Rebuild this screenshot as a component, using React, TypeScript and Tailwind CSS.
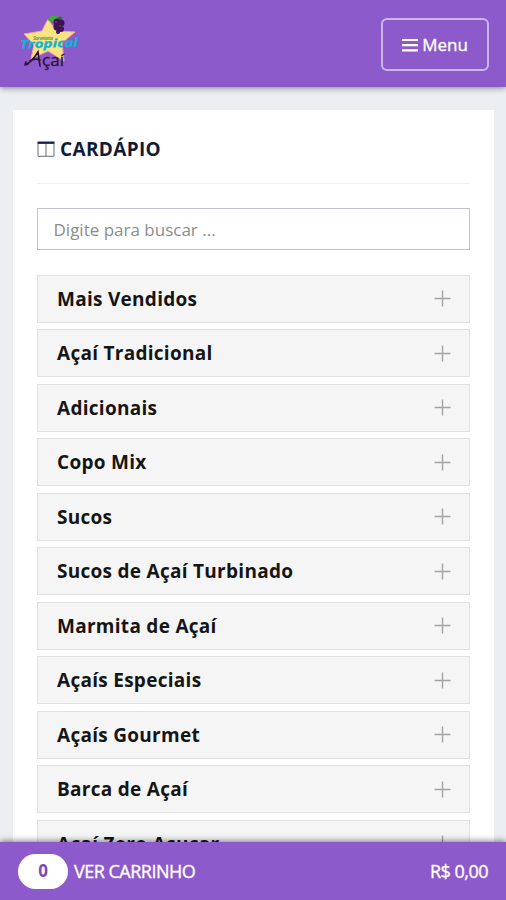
import { useState } from 'react'

const categories = [
  'Mais Vendidos',
  'Açaí Tradicional',
  'Adicionais',
  'Copo Mix',
  'Sucos',
  'Sucos de Açaí Turbinado',
  'Marmita de Açaí',
  'Açaís Especiais',
  'Açaís Gourmet',
  'Barca de Açaí',
  'Açaí Zero Açucar',
]

function Logo() {
  return (
    <svg width="64" height="60" viewBox="18 12 64 60" className="overflow-visible">
      <path
        d="M48 19 L56 31 L75 32 L62 43 L64 61 L48 51 L31 59 L34 45 L24 34 L42 31 Z"
        fill="#fde383"
        stroke="#f3ab91"
        strokeWidth="1"
      />
      <path d="M47 20 Q51 14 58 16 L59 21 Q53 23 47 20 Z" fill="#43a93b" />
      <path d="M57 18 Q60 15 63 18 L60 20 Z" fill="#2d6e34" />
      <g fill="#3b1450">
        <circle cx="57" cy="22" r="3.5" />
        <circle cx="61" cy="23" r="3.5" />
        <circle cx="57" cy="27" r="3.5" />
        <circle cx="61" cy="29" r="3" />
        <circle cx="58" cy="32" r="2" />
      </g>
      <g fill="#69328c">
        <circle cx="56" cy="22" r="1" />
        <circle cx="60" cy="26" r="1" />
      </g>
      <text x="33" y="39.5" fontSize="5" fontWeight="700" fill="#6ba34b" textLength="20" fontFamily="Open Sans, sans-serif">
        Sorveteria
      </text>
      <text
        x="20"
        y="47.5"
        fontSize="11.5"
        fontWeight="700"
        fontStyle="italic"
        fill="#12b4d0"
        stroke="#12b4d0"
        strokeWidth="0.3"
        textLength="58"
        lengthAdjust="spacingAndGlyphs"
        transform="rotate(-2 48 44)"
        fontFamily="Open Sans, sans-serif"
      >
        Tropical
      </text>
      <path
        d="M25 65 Q31 63 38 52 L40 66 M26 62 Q24 66 28 64 M30 61 Q34 58 40 60"
        fill="none"
        stroke="#2c133d"
        strokeWidth="1.7"
        strokeLinecap="round"
      />
      <text
        x="42"
        y="65.5"
        fontSize="16"
        fill="#2c133d"
        stroke="#2c133d"
        strokeWidth="0.3"
        textLength="22"
        lengthAdjust="spacingAndGlyphs"
        fontFamily="Open Sans, sans-serif"
      >
        çaí
      </text>
    </svg>
  )
}

function PlusIcon() {
  return (
    <svg width="17" height="17" viewBox="0 0 17 17" stroke="#a3a3a3" strokeWidth="1.4">
      <path d="M8.5 0.5v16M0.5 8.5h16" />
    </svg>
  )
}

function ColumnsIcon() {
  return (
    <svg width="18" height="17" viewBox="0 0 18 17" fill="none" className="translate-y-px">
      <path d="M1 2.5v12.8h16V2.5M9 2.5v12.8" stroke="#6b6e78" strokeWidth="1" />
      <path d="M0.5 1.7h17" stroke="#17234a" strokeWidth="2.4" />
    </svg>
  )
}

export default function App() {
  const [search, setSearch] = useState('')
  const visible = categories.filter((c) => c.toLowerCase().includes(search.toLowerCase()))

  return (
    <div className="flex h-[900px] w-full flex-col overflow-hidden bg-[#ebeff2] font-['Open_Sans',sans-serif]">
      <header className="z-10 flex h-[87px] shrink-0 items-start justify-between bg-[#8d5acb] pt-3 pr-[17px] pl-[18px] shadow-[0_1px_6px_rgba(0,0,0,0.45)]">
        <Logo />
        <button className="mt-1.5 flex h-[53px] w-[108px] items-center justify-center gap-1 rounded-md border-2 border-[#cfb5ed] text-[17px] text-white">
          <svg width="16" height="14" viewBox="0 0 16 14" stroke="white" strokeWidth="2.2">
            <path d="M0 2h16M0 7.2h16M0 12.4h16" />
          </svg>
          <span className="[-webkit-text-stroke:0.35px_white]">Menu</span>
        </button>
      </header>

      <main className="min-h-0 flex-1 overflow-hidden pt-[23px] pr-3 pl-[13px]">
        <div className="h-[1000px] bg-white pr-6 pl-6">
          <div className="flex h-[74px] items-center gap-[5px] border-b border-[#eeeeee] pt-1">
            <ColumnsIcon />
            <h1 className="translate-y-px text-[19px] font-bold tracking-[0.35px] text-[#101b38]">CARDÁPIO</h1>
          </div>

          <input
            value={search}
            onChange={(e) => setSearch(e.target.value)}
            placeholder="Digite para buscar ..."
            className="mt-6 block h-[42px] w-full border border-[#bfc1d2] px-[15.5px] text-[17px] text-[#444] outline-none placeholder:text-[#8c8c8c]"
          />

          {/* Categories */}
          <div className="mt-[24.5px] flex flex-col gap-[6.5px]">
            {visible.map((name) => (
              <button
                key={name}
                className="flex h-12 shrink-0 items-center justify-between border border-[#e0e0e0] bg-[#f5f5f5] pr-[18px] pl-[19px] text-left text-[19px] font-bold tracking-[0.28px] text-[#151515]"
              >
                <span className="pt-px">{name}</span>
                <PlusIcon />
              </button>
            ))}
          </div>
        </div>
      </main>

      {/* Cart bar */}
      <footer className="z-10 flex h-[58px] shrink-0 items-center justify-between bg-[#8d5acb] pr-[18px] pl-[18px] text-[17px] text-white shadow-[0_-1px_6px_rgba(0,0,0,0.5)]">
        <div className="flex items-center gap-1.5">
          <span className="flex h-[35px] w-[50px] items-center justify-center rounded-full bg-white font-bold text-[#8246b5]">
            0
          </span>
          <span className="text-[18px] tracking-[-0.5px] [-webkit-text-stroke:0.35px_white]">VER CARRINHO</span>
        </div>
        <span className="text-[18px] tracking-[-0.5px] [-webkit-text-stroke:0.35px_white]">R$ 0,00</span>
      </footer>
    </div>
  )
}
